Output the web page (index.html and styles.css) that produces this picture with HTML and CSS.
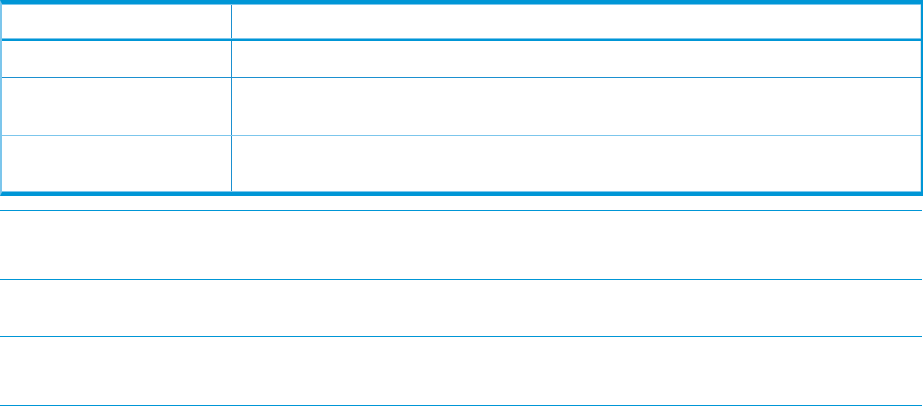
FILE: index.html
```html
<!DOCTYPE html>
<html>
<head>
<meta charset="utf-8">
<link rel="stylesheet" href="styles.css">
</head>
<body>
<div class="page">
  <div class="table">
    <div class="row r1"><div class="cell key"></div><div class="cell val"></div></div>
    <div class="row r2"><div class="cell key"></div><div class="cell val"></div></div>
    <div class="row r3"><div class="cell key"></div><div class="cell val"></div></div>
    <div class="row r4"><div class="cell key"></div><div class="cell val"></div></div>
  </div>
  <div class="list">
    <div class="item i1"></div>
    <div class="item i2"></div>
    <div class="item i3"></div>
  </div>
</div>
</body>
</html>
```
FILE: styles.css
```css
html, body {
  margin: 0;
  padding: 0;
  background: #ffffff;
  font-family: "Liberation Sans", Arial, sans-serif;
}
.page {
  width: 923px;
  display: flex;
  flex-direction: column;
}
.table {
  box-sizing: border-box;
  width: 923px;
  border-top: 4px solid #0096d6;
  border-bottom: 4px solid #0096d6;
  border-left: 2px solid #7cc6ec;
  border-right: 2px solid #0096d6;
  display: flex;
  flex-direction: column;
}
.row {
  display: grid;
  grid-template-columns: 230px 1fr;
}
.cell.key {
  border-right: 1px solid #1b90d0;
}
.cell.val {
  border-right: 1px solid #d6e4ec;
}
.r1 {
  border-top: 1px solid #7cc6ec;
  height: 33px;
  border-bottom: 1px solid #7cc6ec;
}
.r2 {
  border-top: 2px solid #0096d6;
  height: 36px;
  border-bottom: 1px solid #1b90d0;
}
.r3 {
  height: 57px;
  border-bottom: 1px solid #7cc6ec;
}
.r4 {
  height: 55px;
  border-bottom: 1px solid #7cc6ec;
}
.list {
  margin-top: 14px;
  width: 922px;
  border-top: 1px solid #0096d6;
  display: flex;
  flex-direction: column;
}
.item {
  border-bottom: 1px solid #0096d6;
}
.i1 { height: 68px; }
.i2 { height: 56px; }
.i3 { height: 68px; }
```
